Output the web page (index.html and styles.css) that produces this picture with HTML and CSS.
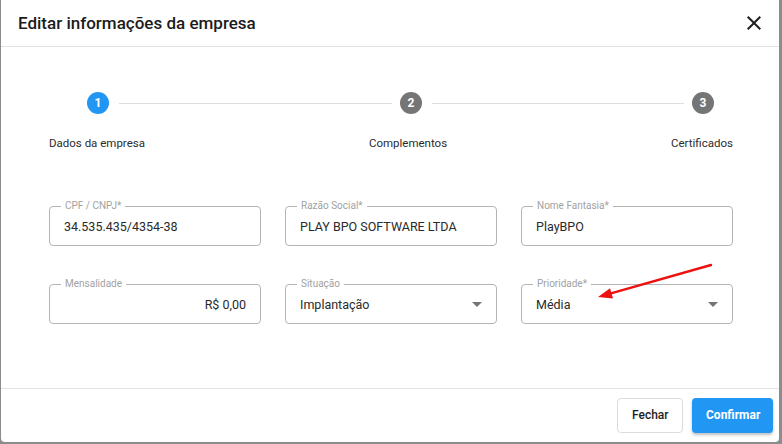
FILE: index.html
```html
<!DOCTYPE html>
<html lang="pt-BR">
<head>
    <meta charset="UTF-8">
    <meta name="viewport" content="width=device-width, initial-scale=1.0">
    <title>Editar informações da empresa</title>
    <link rel="stylesheet" href="styles.css">
</head>
<body>
    <div class="backdrop">
        <div class="dialog">
            <!-- cabeçalho -->
            <header class="dialog-header">
                <h2>Editar informações da empresa</h2>
                <button class="close-button" type="button" aria-label="Fechar">
                    <svg width="24" height="24" viewBox="0 0 24 24"><path d="M19 6.41L17.59 5 12 10.59 6.41 5 5 6.41 10.59 12 5 17.59 6.41 19 12 13.41 17.59 19 19 17.59 13.41 12z" fill="#1f1f1f"/></svg>
                </button>
            </header>

            <div class="dialog-body">
                <!-- etapas -->
                <div class="stepper">
                    <div class="step-track">
                        <span class="step-icon active">1</span>
                        <span class="step-line first"></span>
                        <span class="step-icon">2</span>
                        <span class="step-line second"></span>
                        <span class="step-icon">3</span>
                    </div>
                    <div class="step-labels">
                        <span>Dados da empresa</span>
                        <span>Complementos</span>
                        <span>Certificados</span>
                    </div>
                </div>

                <!-- dados da empresa -->
                <form class="form-grid">
                    <div class="field">
                        <label for="cnpj">CPF / CNPJ*</label>
                        <input type="text" id="cnpj" value="34.535.435/4354-38">
                    </div>
                    <div class="field">
                        <label for="razao">Razão Social*</label>
                        <input type="text" id="razao" value="PLAY BPO SOFTWARE LTDA">
                    </div>
                    <div class="field">
                        <label for="fantasia">Nome Fantasia*</label>
                        <input type="text" id="fantasia" value="PlayBPO">
                    </div>
                    <div class="field">
                        <label for="mensalidade">Mensalidade</label>
                        <input type="text" id="mensalidade" class="align-right" value="R$ 0,00">
                    </div>
                    <div class="field select">
                        <label>Situação</label>
                        <span class="select-value">Implantação</span>
                        <svg class="caret" width="24" height="24" viewBox="0 0 24 24"><path d="M7 10l5 5 5-5z" fill="#757575"/></svg>
                    </div>
                    <div class="field select">
                        <label>Prioridade*</label>
                        <span class="select-value">Média</span>
                        <svg class="caret" width="24" height="24" viewBox="0 0 24 24"><path d="M7 10l5 5 5-5z" fill="#757575"/></svg>
                    </div>
                </form>
            </div>

            <footer class="dialog-actions">
                <button type="button" class="btn btn-outline">Fechar</button>
                <button type="button" class="btn btn-primary">Confirmar</button>
            </footer>
        </div>

        <!-- seta de anotação -->
        <svg class="annotation" width="782" height="444" viewBox="0 0 782 444">
            <line x1="711" y1="265" x2="610" y2="293.6" stroke="#ee1111" stroke-width="2.4" stroke-linecap="round"/>
            <polygon points="598,297 613,298.4 610,288.2" fill="#ee1111"/>
        </svg>
    </div>
</body>
</html>
```

FILE: styles.css
```css
* {
    box-sizing: border-box;
}
body {
    margin: 0;
    padding: 0;
    font-family: Roboto, "Liberation Sans", Arial, sans-serif;
    background-color: #5a5650;
    color: #2a2a2a;
}
.backdrop {
    position: relative;
    width: 782px;
    height: 444px;
    background-color: #8c8c8c;
    overflow: hidden;
}
.dialog {
    display: flex;
    flex-direction: column;
    width: 778px;
    height: 442px;
    margin-left: 1px;
    background-color: #ffffff;
    border-radius: 0 0 4px 4px;
}
.dialog-header {
    display: flex;
    align-items: center;
    justify-content: space-between;
    height: 47px;
    padding: 0 13px 0 17px;
    border-bottom: 1px solid #e2e2e2;
}
.dialog-header h2 {
    margin: 0;
    font-size: 17px;
    font-weight: 500;
    color: #1c1c1c;
}
.close-button {
    display: flex;
    padding: 0;
    border: none;
    background: none;
    cursor: pointer;
}
.dialog-body {
    flex: 1;
    padding: 45px 46px 0 48px;
}
.stepper {
    font-size: 11.5px;
}
.step-track {
    display: flex;
    align-items: center;
    padding: 0 19px 0 38px;
}
.step-icon {
    display: flex;
    align-items: center;
    justify-content: center;
    width: 22px;
    height: 22px;
    border-radius: 50%;
    background-color: #757575;
    color: #ffffff;
    font-size: 12px;
    font-weight: 700;
}
.step-icon.active {
    background-color: #2196f3;
}
.step-line {
    height: 1px;
    margin: 0 8px 0 10px;
    background-color: #dedede;
}
.step-line.first {
    flex: 272;
}
.step-line.second {
    flex: 251;
}
.step-labels {
    display: flex;
    justify-content: space-between;
    margin-top: 22px;
    color: #2c2c2c;
}
.form-grid {
    display: grid;
    grid-template-columns: repeat(3, 1fr);
    column-gap: 24px;
    row-gap: 38px;
    margin-top: 56px;
}
.field {
    position: relative;
    display: flex;
    align-items: center;
    height: 40px;
    padding: 0 14px;
    border: 1px solid #b4b4b4;
    border-radius: 4px;
}
.field label {
    position: absolute;
    top: -7px;
    left: 11px;
    padding: 0 4px;
    background-color: #ffffff;
    font-size: 10px;
    line-height: 12px;
    color: #a2a2a2;
}
.field input {
    width: 100%;
    padding: 0;
    border: none;
    outline: none;
    font-family: inherit;
    font-size: 12.5px;
    color: #2a2a2a;
    background: transparent;
}
.field input.align-right {
    text-align: right;
}
.select-value {
    flex: 1;
    font-size: 12.5px;
}
.caret {
    margin-right: -7px;
}
.dialog-actions {
    display: flex;
    align-items: center;
    justify-content: flex-end;
    gap: 9px;
    height: 54px;
    padding: 0 6px 1px 0;
    border-top: 1px solid #e2e2e2;
}
.btn {
    height: 35px;
    padding: 0 14px;
    border-radius: 4px;
    font-family: inherit;
    font-size: 12px;
    cursor: pointer;
}
.btn-outline {
    width: 66px;
    border: 1px solid #dcdcdc;
    background-color: #ffffff;
    color: #1e1e1e;
    font-weight: 500;
}
.btn-primary {
    width: 81px;
    border: none;
    background-color: #2196f3;
    color: #ffffff;
    font-weight: 700;
    box-shadow: 0 2px 3px rgba(0, 0, 0, 0.25);
}
.annotation {
    position: absolute;
    top: 0;
    left: 0;
    pointer-events: none;
}
```
